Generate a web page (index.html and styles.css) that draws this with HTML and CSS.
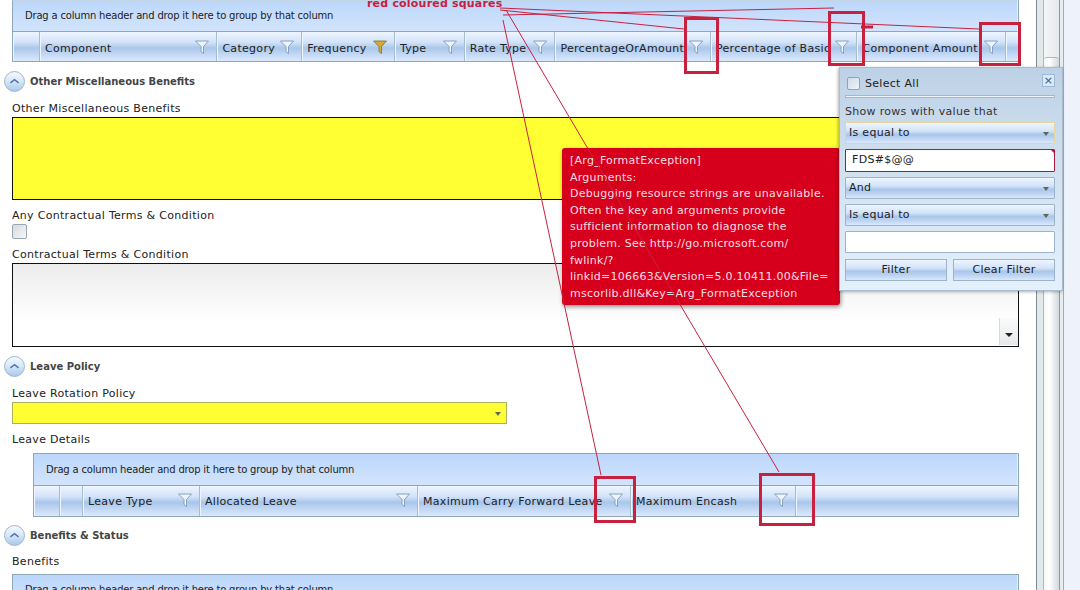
FILE: index.html
```html
<!DOCTYPE html>
<html>
<head>
  <title>Benefits</title>
  <link rel="stylesheet" href="styles.css">
</head>
<body>
  <svg class="defs" width="0" height="0">
    <symbol id="funnel" viewBox="0 0 14 14">
      <path d="M0.5 1 H13.5 L8.5 6.5 V13.5 L6 11.5 V6.5 Z" fill="#eef4fc" stroke="#7f9ab5" stroke-width="0.9"/>
    </symbol>
    <symbol id="funnel-on" viewBox="0 0 14 14">
      <path d="M0.5 1 H13.5 L8.5 6.5 V13.5 L6 11.5 V6.5 Z" fill="#d8a92c" stroke="#7d7a55" stroke-width="0.9"/>
    </symbol>
    <symbol id="chevron" viewBox="0 0 21 21">
      <path d="M6 12 L10.5 8.5 L15 12" fill="none" stroke="#4a78ad" stroke-width="1.6"/>
    </symbol>
  </svg>

  <div class="page">
    <div class="content">
      <div class="grid top">
        <div class="group-panel">Drag a column header and drop it here to group by that column</div>
        <div class="header-row">
          <div class="cell w27"></div>
          <div class="cell w178"><span>Component</span><svg class="funnel"><use href="#funnel"/></svg></div>
          <div class="cell w85"><span>Category</span><svg class="funnel"><use href="#funnel"/></svg></div>
          <div class="cell w93"><span>Frequency</span><svg class="funnel"><use href="#funnel-on"/></svg></div>
          <div class="cell w70"><span>Type</span><svg class="funnel"><use href="#funnel"/></svg></div>
          <div class="cell w91"><span>Rate Type</span><svg class="funnel"><use href="#funnel"/></svg></div>
          <div class="cell w156"><span>PercentageOrAmount</span><svg class="funnel"><use href="#funnel"/></svg></div>
          <div class="cell w147"><span>Percentage of Basic</span><svg class="funnel"><use href="#funnel"/></svg></div>
          <div class="cell w149"><span>Component Amount</span><svg class="funnel"><use href="#funnel"/></svg></div>
          <div class="cell filler"></div>
        </div>
      </div>

      <div class="section"><svg class="toggle"><use href="#chevron"/></svg>Other Miscellaneous Benefits</div>
      <div class="label first">Other Miscellaneous Benefits</div>
      <div class="box yellow-box"></div>
      <div class="label">Any Contractual Terms &amp; Condition</div>
      <div class="check"></div>
      <div class="label">Contractual Terms &amp; Condition</div>
      <div class="box grey-box"><div class="down-btn"></div></div>

      <div class="section"><svg class="toggle"><use href="#chevron"/></svg>Leave Policy</div>
      <div class="label first">Leave Rotation Policy</div>
      <div class="yellow-select"><i class="arrow"></i></div>
      <div class="label">Leave Details</div>
      <div class="grid inner">
        <div class="group-panel">Drag a column header and drop it here to group by that column</div>
        <div class="header-row">
          <div class="cell w26"></div>
          <div class="cell w23"></div>
          <div class="cell w117"><span>Leave Type</span><svg class="funnel"><use href="#funnel"/></svg></div>
          <div class="cell w218"><span>Allocated Leave</span><svg class="funnel"><use href="#funnel"/></svg></div>
          <div class="cell w213"><span>Maximum Carry Forward Leave</span><svg class="funnel"><use href="#funnel"/></svg></div>
          <div class="cell w165"><span>Maximum Encash</span><svg class="funnel"><use href="#funnel"/></svg></div>
          <div class="cell filler"></div>
        </div>
      </div>

      <div class="section tight"><svg class="toggle"><use href="#chevron"/></svg>Benefits &amp; Status</div>
      <div class="label">Benefits</div>
      <div class="grid last">
        <div class="group-panel">Drag a column header and drop it here to group by that column</div>
      </div>
    </div>

    <div class="scroller">
      <div class="rail"></div>
      <div class="track"><div class="thumb"></div></div>
      <div class="rail narrow"></div>
    </div>
    <div class="outer"></div>
  </div>

  <div class="tooltip">
    [Arg_FormatException]<br>
    Arguments:<br>
    Debugging resource strings are unavailable.<br>
    Often the key and arguments provide<br>
    sufficient information to diagnose the<br>
    problem. See http://go.microsoft.com/<br>
    fwlink/?<br>
    linkid=106663&amp;Version=5.0.10411.00&amp;File=<br>
    mscorlib.dll&amp;Key=Arg_FormatException
  </div>

  <div class="filter-popup">
    <div class="popup-top">
      <div class="check small"></div>
      <span>Select All</span>
      <div class="close">×</div>
    </div>
    <div class="rule"></div>
    <div class="popup-label">Show rows with value that</div>
    <div class="combo focused">Is equal to<i class="arrow"></i></div>
    <div class="input error">FDS#$@@</div>
    <div class="combo">And<i class="arrow"></i></div>
    <div class="combo">Is equal to<i class="arrow"></i></div>
    <div class="input"></div>
    <div class="popup-buttons">
      <div class="btn">Filter</div>
      <div class="btn">Clear Filter</div>
    </div>
  </div>

  <!-- annotation drawn over the screenshot -->
  <div class="note">red coloured squares</div>
  <svg class="marks" width="1080" height="590">
    <g fill="none" stroke="#c8213f">
      <path d="M500 10 L684 29"/>
      <path d="M503 15 L834 8"/>
      <path d="M500 8 L979 29"/>
      <path d="M503 20 L601 475"/>
      <path d="M506 10 L779 472"/>
      <g stroke-width="3">
        <rect x="685.5" y="18.5" width="32" height="54"/>
        <rect x="829.5" y="12.5" width="34" height="52"/>
        <rect x="980.5" y="23.5" width="39" height="41"/>
        <rect x="595.5" y="477.5" width="39" height="44"/>
        <rect x="760.5" y="474.5" width="53" height="50"/>
      </g>
      <path d="M861 27 H873" stroke-width="3"/>
    </g>
  </svg>
</body>
</html>
```

FILE: styles.css
```css
html, body {
  margin: 0;
  padding: 0;
  height: 590px;
  overflow: hidden;
  background: #fff;
  font-family: "DejaVu Sans", sans-serif;
  font-size: 11px;
  color: #222;
}

.defs {
  position: absolute;
}

.page {
  display: flex;
  height: 590px;
}

.content {
  width: 1007px;
  padding-left: 12px;
  padding-right: 17px;
  overflow: hidden;
}

/* grids */
.grid {
  width: 1005px;
  border: 1px solid #8fa8b8;
  border-top-color: #c3d6e6;
  height: 60px;
}

.grid.top .group-panel {
  height: 31px;
}

.grid.top .cell {
  padding-top: 3px;
}

.grid.inner {
  width: 984px;
  margin-left: 21px;
  margin-top: 6px;
  height: 62px;
  border-top-color: #8fa8b8;
}

.grid.inner .group-panel {
  line-height: 31px;
}

.grid.last {
  margin-top: 5px;
  border-top-color: #8fa8b8;
}

.group-panel {
  height: 32px;
  line-height: 30px;
  padding-left: 12px;
  background: linear-gradient(#bcd7fb, #d2e4fc);
  font-size: 10px;
  letter-spacing: -0.19px;
  border-right: 1px solid #e6f0fc;
  border-bottom: 1px solid #8fa8b8;
  box-sizing: border-box;
}

.header-row {
  display: flex;
  height: 29px;
  background: linear-gradient(#eef5fe 0%, #d3e3f9 35%, #a9c6ea 55%, #c6daf5 80%, #dbe8fb 100%);
}

.inner .header-row {
  height: 30px;
}

.cell {
  display: flex;
  align-items: center;
  box-sizing: border-box;
  border-right: 1px solid #a6bdd0;
  border-left: 1px solid #eef5fe;
  padding-left: 4px;
  padding-right: 7px;
  letter-spacing: 0.3px;
}

.cell span {
  flex: 1;
  min-width: 0;
  white-space: nowrap;
  overflow: hidden;
}

.cell.filler {
  flex: 1;
  border-right: 0;
}

.funnel {
  flex: none;
  width: 14px;
  height: 14px;
  margin-left: 2px;
  margin-bottom: 2px;
}

.w23 { width: 23px; }
.w26 { width: 26px; }
.w27 { width: 27px; }
.w70 { width: 70px; }
.w85 { width: 85px; }
.w91 { width: 91px; }
.w93 { width: 93px; }
.w117 { width: 117px; }
.w147 { width: 147px; }
.w149 { width: 149px; }
.w156 { width: 156px; }
.w165 { width: 165px; }
.w178 { width: 178px; }
.w213 { width: 213px; }
.w218 { width: 218px; }

/* sections and fields */
.section {
  display: flex;
  align-items: flex-start;
  height: 21px;
  line-height: 21px;
  margin-top: 9px;
  margin-left: -8px;
  font-weight: bold;
  font-size: 10px;
  color: #444;
}

.section.tight {
  margin-top: 8px;
}

.toggle {
  width: 21px;
  height: 21px;
  margin-right: 5px;
  box-sizing: border-box;
  border: 1px solid #9db6cf;
  border-radius: 50%;
  background: linear-gradient(#f3f8fe, #dbe8f8 45%, #a9c8ec);
}

.label {
  height: 15px;
  line-height: 15px;
  margin-top: 8px;
  margin-bottom: 1px;
  letter-spacing: 0.3px;
}

.label.first {
  margin-top: 9px;
}

.box {
  position: relative;
  box-sizing: border-box;
  width: 1007px;
  border: 1px solid #111;
}

.yellow-box {
  height: 83px;
  background: #ffff33;
}

.grey-box {
  height: 84px;
  background: linear-gradient(#ececec, #fff 70%);
}

.down-btn {
  position: absolute;
  right: 0;
  bottom: 1px;
  width: 19px;
  height: 27px;
  box-sizing: border-box;
  border-left: 1px solid #d4dade;
  background: linear-gradient(#fafbfb, #e6e9ec);
}

.down-btn::after {
  content: "";
  position: absolute;
  left: 5px;
  top: 15px;
  border: 4px solid transparent;
  border-top: 4px solid #222;
  border-bottom: 0;
}

.check {
  width: 15px;
  height: 15px;
  box-sizing: border-box;
  border: 1px solid #9aa8b4;
  border-radius: 2px;
  background: linear-gradient(135deg, #d5dade, #f6f7f8);
}

.yellow-select {
  position: relative;
  box-sizing: border-box;
  width: 495px;
  height: 22px;
  border: 1px solid #a9b35c;
  background: #ffff33;
}

.arrow {
  position: absolute;
  right: 5px;
  top: 9px;
  border: 3px solid transparent;
  border-top: 4px solid #5a6a55;
  border-bottom: 0;
}

/* window scrollbar on the right */
.scroller {
  display: flex;
  flex: none;
  height: 590px;
  border-left: 1px solid #7f8c96;
}

.rail {
  width: 6px;
  background: #e2e7ea;
  border-right: 1px solid #aeb9c0;
}

.rail.narrow {
  width: 3px;
  border-left: 1px solid #8f9a9c;
  background: #e6ecf0;
  border-right: 1px solid #a4acb2;
}

.track {
  width: 15px;
  background: linear-gradient(90deg, #f4f5f6, #e6e9ec);
  position: relative;
}

.thumb {
  position: absolute;
  top: 57px;
  left: 0;
  right: 0;
  bottom: 0;
  border-radius: 3px 3px 0 0;
  border-top: 1px solid #b0b8be;
  background: linear-gradient(90deg, #f4f6f7, #fff 35%, #d3d8dc);
}

.outer {
  flex: 1;
  background: #eef3fb;
}

/* red validation tooltip */
.tooltip {
  position: absolute;
  left: 562px;
  top: 148px;
  width: 278px;
  height: 157px;
  box-sizing: border-box;
  padding: 5px 0 0 8px;
  line-height: 16.6px;
  letter-spacing: 0.25px;
  color: #f6dfe2;
  background: #d6001c;
  border-radius: 3px;
  box-shadow: 1px 2px 4px rgba(0, 0, 0, 0.4);
  white-space: nowrap;
  font-size: 11px;
}

/* column filter popup */
.filter-popup {
  position: absolute;
  left: 839px;
  top: 67px;
  width: 224px;
  height: 224px;
  box-sizing: border-box;
  padding: 6px 7px 0 5px;
  border: 1px solid #a9bccd;
  background: linear-gradient(#bdd1e6, #cfdfef 40%, #e4f0fc);
  box-shadow: -1px 1px 3px rgba(0, 0, 0, 0.3);
  display: flex;
  flex-direction: column;
  letter-spacing: 0.3px;
}

.popup-top {
  position: relative;
  display: flex;
  align-items: center;
  gap: 5px;
  height: 18px;
  margin-left: 2px;
}

.check.small {
  width: 13px;
  height: 13px;
  background: linear-gradient(135deg, #cfdcea, #eef4fa);
  border-color: #8ea3b8;
}

.close {
  position: absolute;
  right: 0;
  top: 0;
  width: 13px;
  height: 13px;
  line-height: 12px;
  text-align: center;
  border: 1px solid #9cb9d9;
  background: #dbe8f6;
  color: #38587a;
  box-sizing: border-box;
}

.rule {
  height: 3px;
  margin-top: 3px;
  box-sizing: border-box;
  border: 1px solid #a4b8c8;
  background: #eef4fb;
}

.popup-label {
  height: 15px;
  line-height: 15px;
  margin-top: 6px;
  color: #333;
}

.combo, .input {
  position: relative;
  box-sizing: border-box;
  height: 22px;
  line-height: 20px;
  padding-left: 3px;
  margin-top: 5px;
  border: 1px solid #9db4c8;
  border-radius: 1px;
}

.combo {
  background: linear-gradient(#eef5fe 0%, #d3e3f9 40%, #a9c6ea 58%, #c6daf5 85%, #dbe8fb 100%);
}

.combo.focused {
  margin-top: 3px;
  border-color: #e6d59c;
}

.input {
  background: #fff;
  padding-left: 6px;
}

.input.error {
  height: 23px;
  border-color: #a8193a;
  overflow: hidden;
}

.input.error::after {
  content: "";
  position: absolute;
  right: -1px;
  top: -1px;
  border-top: 5px solid #c8102e;
  border-left: 5px solid transparent;
}

.popup-buttons {
  display: flex;
  gap: 6px;
  margin-top: 6px;
}

.btn {
  flex: 1;
  box-sizing: border-box;
  height: 22px;
  line-height: 20px;
  text-align: center;
  border: 1px solid #9db4c8;
  background: linear-gradient(#eef5fe 0%, #d3e3f9 40%, #a9c6ea 58%, #c6daf5 85%, #dbe8fb 100%);
}

/* annotation layer */
.note {
  position: absolute;
  left: 367px;
  top: -3px;
  font-weight: bold;
  font-size: 11px;
  line-height: 14px;
  letter-spacing: 0.2px;
  color: #c8213f;
  white-space: nowrap;
}

.marks {
  position: absolute;
  left: 0;
  top: 0;
  pointer-events: none;
}
```
